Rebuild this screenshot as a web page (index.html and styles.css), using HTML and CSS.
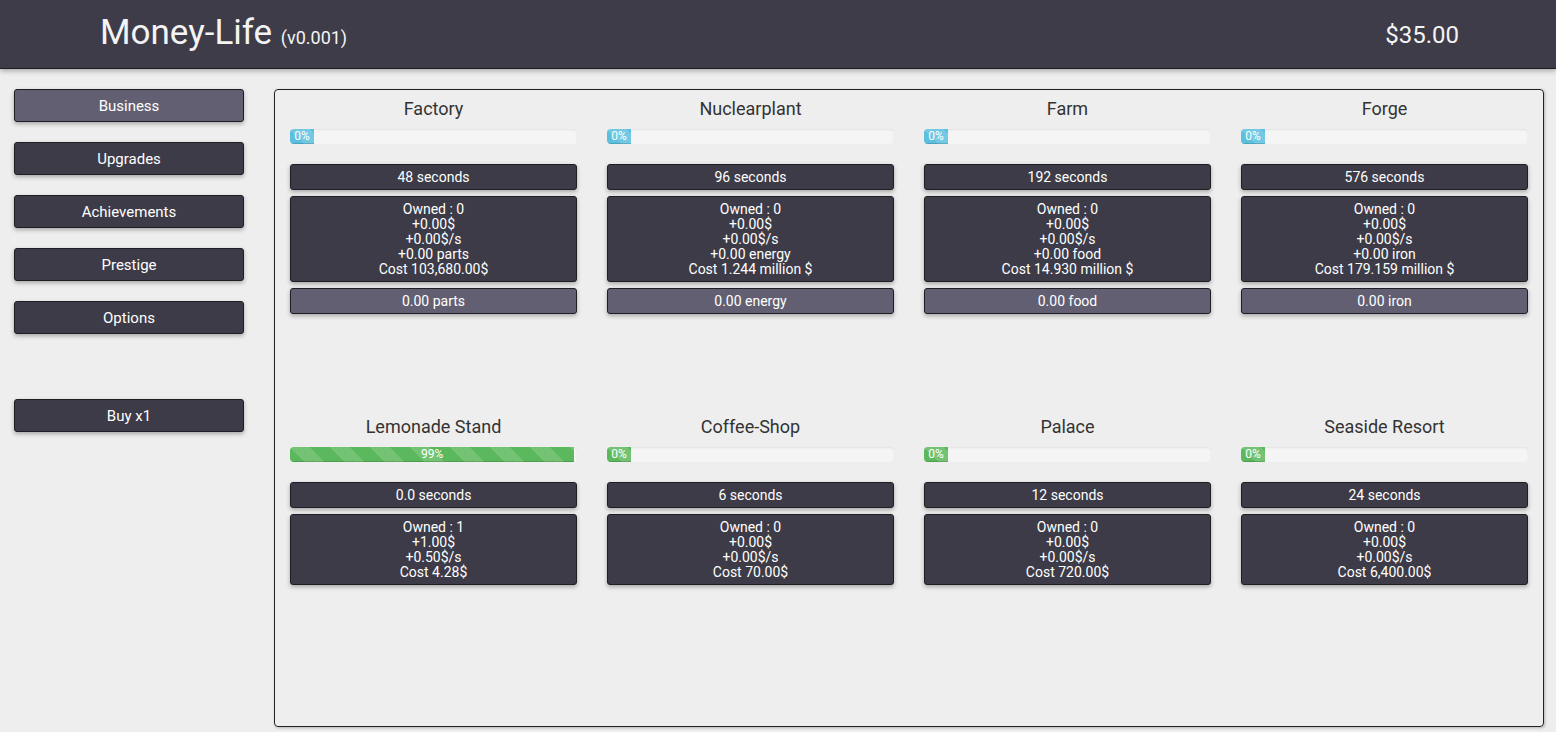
FILE: index.html
```html
<!DOCTYPE html>
<html>
<head>
<meta charset="utf-8">
<title>Money-Life</title>
<link rel="stylesheet" href="styles.css">
</head>
<body>
<header class="topbar">
  <h1 class="brand">Money-Life <small class="version">(v0.001)</small></h1>
  <div class="money">$35.00</div>
</header>
<div class="layout">
  <nav class="sidebar">
    <button class="btn nav-btn active">Business</button>
    <button class="btn nav-btn">Upgrades</button>
    <button class="btn nav-btn">Achievements</button>
    <button class="btn nav-btn">Prestige</button>
    <button class="btn nav-btn">Options</button>
    <button class="btn nav-btn buy">Buy x1</button>
  </nav>
  <main class="panel">
    <div class="grid">
      <section class="card">
        <h3 class="card-title">Factory</h3>
        <div class="progress"><div class="bar info striped" style="width:0%">0%</div></div>
        <div class="btn box">48 seconds</div>
        <div class="btn box info-box">Owned : 0<br>+0.00$<br>+0.00$/s<br>+0.00 parts<br>Cost 103,680.00$</div>
        <div class="btn box light">0.00 parts</div>
      </section>
      <section class="card">
        <h3 class="card-title">Nuclearplant</h3>
        <div class="progress"><div class="bar info striped" style="width:0%">0%</div></div>
        <div class="btn box">96 seconds</div>
        <div class="btn box info-box">Owned : 0<br>+0.00$<br>+0.00$/s<br>+0.00 energy<br>Cost 1.244 million $</div>
        <div class="btn box light">0.00 energy</div>
      </section>
      <section class="card">
        <h3 class="card-title">Farm</h3>
        <div class="progress"><div class="bar info striped" style="width:0%">0%</div></div>
        <div class="btn box">192 seconds</div>
        <div class="btn box info-box">Owned : 0<br>+0.00$<br>+0.00$/s<br>+0.00 food<br>Cost 14.930 million $</div>
        <div class="btn box light">0.00 food</div>
      </section>
      <section class="card">
        <h3 class="card-title">Forge</h3>
        <div class="progress"><div class="bar info striped" style="width:0%">0%</div></div>
        <div class="btn box">576 seconds</div>
        <div class="btn box info-box">Owned : 0<br>+0.00$<br>+0.00$/s<br>+0.00 iron<br>Cost 179.159 million $</div>
        <div class="btn box light">0.00 iron</div>
      </section>
      <section class="card">
        <h3 class="card-title">Lemonade Stand</h3>
        <div class="progress"><div class="bar success striped" style="width:99%">99%</div></div>
        <div class="btn box">0.0 seconds</div>
        <div class="btn box info-box">Owned : 1<br>+1.00$<br>+0.50$/s<br>Cost 4.28$</div>
      </section>
      <section class="card">
        <h3 class="card-title">Coffee-Shop</h3>
        <div class="progress"><div class="bar success striped" style="width:0%">0%</div></div>
        <div class="btn box">6 seconds</div>
        <div class="btn box info-box">Owned : 0<br>+0.00$<br>+0.00$/s<br>Cost 70.00$</div>
      </section>
      <section class="card">
        <h3 class="card-title">Palace</h3>
        <div class="progress"><div class="bar success striped" style="width:0%">0%</div></div>
        <div class="btn box">12 seconds</div>
        <div class="btn box info-box">Owned : 0<br>+0.00$<br>+0.00$/s<br>Cost 720.00$</div>
      </section>
      <section class="card">
        <h3 class="card-title">Seaside Resort</h3>
        <div class="progress"><div class="bar success striped" style="width:0%">0%</div></div>
        <div class="btn box">24 seconds</div>
        <div class="btn box info-box">Owned : 0<br>+0.00$<br>+0.00$/s<br>Cost 6,400.00$</div>
      </section>
    </div>
  </main>
</div>
</body>
</html>
```
FILE: styles.css
```css
* { box-sizing: border-box; }

html, body {
  margin: 0;
  padding: 0;
  height: 100%;
}

body {
  background: #eeeeee;
  font-family: Roboto, "Liberation Sans", Arial, sans-serif;
  color: #333333;
  overflow: hidden;
}

.topbar {
  height: 69px;
  background: #3e3c48;
  border-bottom: 1px solid #1e1d24;
  box-shadow: 0 2px 5px rgba(0, 0, 0, 0.3);
  display: flex;
  align-items: center;
  justify-content: space-between;
  padding: 2px 97px 0 100px;
  color: #f4f4f4;
  position: relative;
  z-index: 1;
}

.brand {
  margin: 0;
  font-size: 35px;
  font-weight: 400;
  line-height: 40px;
}

.version {
  font-size: 18px;
  font-weight: 400;
}

.money {
  font-size: 24px;
  line-height: 30px;
}

.layout {
  display: flex;
  padding: 20px 12px 0 14px;
}

.sidebar {
  width: 230px;
  flex: 0 0 230px;
  display: flex;
  flex-direction: column;
  gap: 20px;
}

.btn {
  display: block;
  background: #3d3b47;
  color: #ffffff;
  border: 1px solid #1f1e25;
  border-radius: 3px;
  box-shadow: 0 2px 4px rgba(0, 0, 0, 0.3);
  font-family: Roboto, "Liberation Sans", Arial, sans-serif;
  text-align: center;
}

.nav-btn {
  width: 230px;
  height: 33px;
  font-size: 15px;
  font-weight: 400;
  line-height: 33px;
  padding: 0;
}

.nav-btn.active {
  background: #625f72;
}

.nav-btn.buy {
  margin-top: 45px;
}

.panel {
  margin-left: 30px;
  flex: 1;
  height: 638px;
  border: 1px solid #222222;
  border-radius: 4px;
  box-shadow: 1px 1px 3px rgba(0, 0, 0, 0.25);
  padding: 0 15px;
}

.grid {
  display: grid;
  grid-template-columns: repeat(4, 1fr);
  column-gap: 30px;
  row-gap: 88px;
}

.card-title {
  margin: 8px 0 9px;
  font-size: 18px;
  font-weight: 400;
  line-height: 22px;
  text-align: center;
  color: #333333;
}

.progress {
  height: 15px;
  background: #f5f5f5;
  border-radius: 4px;
  box-shadow: inset 0 1px 2px rgba(0, 0, 0, 0.08);
  overflow: hidden;
  margin-bottom: 20px;
}

.bar {
  height: 100%;
  min-width: 24px;
  font-size: 12px;
  font-weight: 400;
  line-height: 15px;
  color: #ffffff;
  text-align: center;
  box-shadow: inset 0 -1px 0 rgba(0, 0, 0, 0.15);
}

.bar.info { background-color: #5bc0de; }
.bar.success { background-color: #5cb85c; }

.bar.striped {
  background-image: linear-gradient(45deg, rgba(255, 255, 255, 0.15) 25%, transparent 25%, transparent 50%, rgba(255, 255, 255, 0.15) 50%, rgba(255, 255, 255, 0.15) 75%, transparent 75%, transparent);
  background-size: 40px 40px;
}

.box {
  height: 26px;
  font-size: 14px;
  line-height: 24px;
  margin-bottom: 6px;
}

.info-box {
  height: auto;
  line-height: 15px;
  padding: 5px 5px 4px;
}

.box.light {
  background: #625f72;
}
```
